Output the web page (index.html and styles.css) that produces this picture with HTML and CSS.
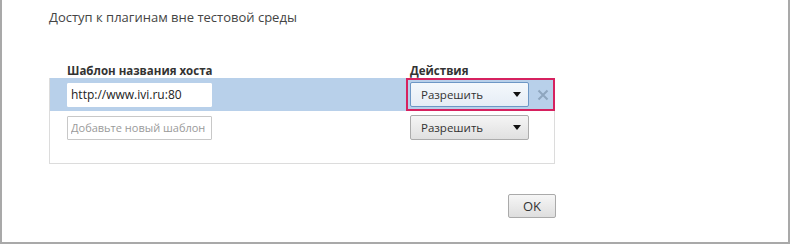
FILE: index.html
```html
<!DOCTYPE html>
<html>
<head>
  <meta charset="utf-8">
  <title>Доступ к плагинам</title>
  <link rel="stylesheet" href="styles.css">
</head>
<body>
  <div class="dialog">
    <h1 class="title">Доступ к плагинам вне тестовой среды</h1>

    <div class="list-head">
      <span class="col-host">Шаблон названия хоста</span>
      <span class="col-action">Действия</span>
    </div>

    <div class="list">
      <div class="row selected">
        <div class="col-host">
          <input type="text" class="host-input" value="http://www.ivi.ru:80">
        </div>
        <div class="col-action">
          <div class="select focused">Разрешить <span class="arrow"></span></div>
          <span class="remove">
            <svg width="12" height="12" viewBox="0 0 12 12">
              <path d="M1.5 1.5 L10.5 10.5 M10.5 1.5 L1.5 10.5" stroke="#8ea6bf" stroke-width="2" fill="none"/>
            </svg>
          </span>
          <div class="highlight"></div>
        </div>
      </div>
      <div class="row">
        <div class="col-host">
          <input type="text" class="host-input" placeholder="Добавьте новый шаблон">
        </div>
        <div class="col-action">
          <div class="select">Разрешить <span class="arrow"></span></div>
        </div>
      </div>
    </div>

    <div class="footer">
      <button class="ok-button">OK</button>
    </div>
  </div>
</body>
</html>
```

FILE: styles.css
```css
body {
  margin: 0;
  background-color: #fff;
  font-family: "Open Sans", "Noto Sans", sans-serif;
  color: #333;
}

.dialog {
  box-sizing: border-box;
  width: 790px;
  height: 244px;
  border: 2px solid #a9a9a9;
  border-top: none;
  padding: 0 0 0 47px;
}

.title {
  margin: 0;
  padding-top: 8px;
  font-size: 13px;
  font-weight: normal;
  color: #444;
  height: 22px;
}

.list-head {
  display: flex;
  align-items: flex-end;
  margin-top: 30px;
  height: 18px;
  font-size: 11.5px;
  font-weight: bold;
  color: #333;
}

.list-head .col-host {
  width: 343px;
  padding-left: 18px;
}

.list {
  width: 504px;
  height: 85px;
  border: 1px solid #dcdcdc;
  border-top: none;
}

.row {
  display: flex;
  align-items: center;
  height: 33px;
}

.row.selected {
  background-color: #b8d0ea;
}

.row .col-host {
  width: 343px;
  padding-left: 17px;
}

.col-action {
  position: relative;
  display: flex;
  align-items: center;
}

.host-input {
  box-sizing: border-box;
  width: 145px;
  height: 24px;
  margin: 0;
  padding: 0 3px;
  border: 1px solid #c8c8c8;
  border-radius: 1px;
  font-family: inherit;
  font-size: 12px;
  color: #222;
}

.selected .host-input {
  border-color: #fff;
}

.host-input::placeholder {
  color: #9a9a9a;
  font-size: 11px;
}

.select {
  box-sizing: border-box;
  display: flex;
  align-items: center;
  justify-content: space-between;
  width: 119px;
  height: 25px;
  padding: 0 7px 0 10px;
  border: 1px solid #acacac;
  border-radius: 2px;
  background: linear-gradient(#f5f5f5, #e0e0e0);
  font-size: 11.5px;
  color: #333;
}

.select.focused {
  border-color: #6d97c5;
  background: linear-gradient(#f4f8fc, #e6edf5);
}

.arrow {
  width: 0;
  height: 0;
  border-left: 4px solid transparent;
  border-right: 4px solid transparent;
  border-top: 5px solid #111;
}

.remove {
  display: flex;
  margin-left: 8px;
}

/* annotation frame around the focused action */
.highlight {
  position: absolute;
  left: -4px;
  top: -4px;
  width: 145px;
  height: 29px;
  border: 2px solid #d6215f;
}

.footer {
  display: flex;
  justify-content: flex-end;
  width: 507px;
  margin-top: 30px;
}

.ok-button {
  width: 48px;
  height: 24px;
  border: 1px solid #aaa;
  border-radius: 2px;
  background: linear-gradient(#f6f6f6, #dedede);
  font-family: inherit;
  font-size: 13px;
  color: #333;
}
```
